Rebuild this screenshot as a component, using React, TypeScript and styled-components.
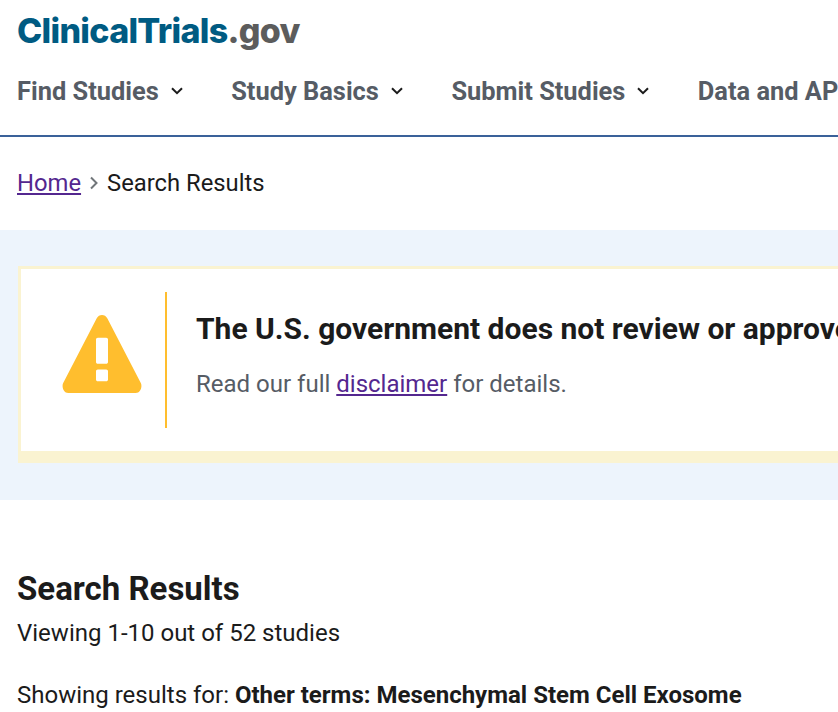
import React from "react";
import styled, { createGlobalStyle } from "styled-components";

const Global = createGlobalStyle`
  html, body { margin: 0; padding: 0; background: #fff; overflow: hidden; width: 838px; height: 712px; }
  body { font-family: Roboto, "Liberation Sans", sans-serif; color: #1b1b1b; }
`;

const Page = styled.div`
  width: 838px;
  height: 712px;
  overflow: hidden;
`;

const Header = styled.header`
  height: 135px;
  border-bottom: 2px solid #3a6199;
  padding-left: 17px;
`;

const Logo = styled.div`
  font-family: Inter, "Liberation Sans", sans-serif;
  font-size: 34px;
  line-height: 40px;
  font-weight: 800;
  letter-spacing: -0.7px;
  color: #005b82;
  padding-top: 11px;
  height: 40px;
  white-space: nowrap;
`;

const Gov = styled.span`
  color: #5c5c5c;
`;

const Nav = styled.nav`
  display: flex;
  gap: 47.5px;
  margin-top: 21px;
  white-space: nowrap;
`;

const NavItem = styled.div`
  display: flex;
  align-items: center;
  gap: 11px;
  font-size: 25.4px;
  line-height: 38px;
  font-weight: 700;
  color: #565c65;
`;

const Crumbs = styled.div`
  display: flex;
  align-items: center;
  gap: 8px;
  height: 32px;
  padding: 30px 0 0 17px;
  font-size: 23.8px;
  line-height: 32px;
`;

const CrumbLink = styled.a`
  color: #54278f;
  text-decoration: underline;
`;

const Band = styled.section`
  margin-top: 31px;
  height: 270px;
  background: #edf4fc;
  padding: 36px 0 0 18px;
  box-sizing: border-box;
`;

const Card = styled.div`
  width: 900px;
  height: 197px;
  box-sizing: border-box;
  background: #fff;
  border: 3px solid #faf3d1;
  border-bottom-width: 12px;
  border-right: 0;
  display: flex;
  align-items: center;
`;

const IconCell = styled.div`
  width: 146px;
  height: 136px;
  margin-top: -1px;
  padding: 0 0 11px 18px;
  border-right: 2px solid #ffbe2e;
  display: flex;
  align-items: center;
  justify-content: center;
  flex-shrink: 0;
  box-sizing: border-box;
`;

const CardBody = styled.div`
  padding: 0 0 9px 29px;
  white-space: nowrap;
`;

const CardTitle = styled.div`
  font-size: 30px;
  line-height: 38px;
  font-weight: 700;
  color: #1b1b1b;
`;

const CardText = styled.div`
  margin-top: 19px;
  font-size: 24px;
  line-height: 34px;
  color: #565c65;
`;

const Results = styled.section`
  padding: 69px 0 0 17px;
`;

const ResultsTitle = styled.h1`
  margin: 0;
  font-size: 33px;
  line-height: 40px;
  font-weight: 700;
  color: #1b1b1b;
`;

const Line = styled.p`
  margin: 9px 0 0;
  font-size: 24px;
  line-height: 30px;
  color: #1b1b1b;
  white-space: nowrap;
`;

const LineLow = styled(Line)`
  margin-top: 32px;
`;

const Chevron = () => (
  <svg width="14" height="10" viewBox="0 0 14 10" fill="none" aria-hidden="true">
    <path d="M2 2.2l5 5 5-5" stroke="#1b1b1b" strokeWidth="2" />
  </svg>
);

const CrumbArrow = () => (
  <svg width="10" height="16" viewBox="0 0 10 16" fill="none" aria-hidden="true">
    <path d="M2 2.5L7.5 8 2 13.5" stroke="#71767a" strokeWidth="2" />
  </svg>
);

const Warning = () => (
  <svg width="80" height="80" viewBox="0 0 80 80" aria-hidden="true">
    <path
      fillRule="evenodd"
      fill="#ffbe2e"
      d="M34.6 4.500c2.400-4.600 8.400-4.600 10.800 0l33.400 64.600c1.800 3.600-.4 9.900-5 9.900H6.200c-4.600 0-6.800-6.300-5-9.900L34.600 4.500zM34 25.500v22.500c0 1 .8 1.800 1.800 1.800h8.400c1 0 1.800-.8 1.800-1.800V25.500c0-1-.8-1.800-1.800-1.800h-8.400c-1 0-1.800.8-1.800 1.800zM35.800 55.500c-1 0-1.800.8-1.800 1.800v8.200c0 1 .8 1.800 1.800 1.800h8.400c1 0 1.800-.8 1.800-1.800v-8.200c0-1-.8-1.800-1.800-1.800h-8.400z"
    />
  </svg>
);

export default function App() {
  return (
    <Page>
      <Global />
      <Header>
        <Logo>
          ClinicalTrials<Gov>.gov</Gov>
        </Logo>
        <Nav>
          <NavItem>Find Studies <Chevron /></NavItem>
          <NavItem>Study Basics <Chevron /></NavItem>
          <NavItem>Submit Studies <Chevron /></NavItem>
          <NavItem>Data and API <Chevron /></NavItem>
        </Nav>
      </Header>
      <Crumbs>
        <CrumbLink href="#">Home</CrumbLink>
        <CrumbArrow />
        <span>Search Results</span>
      </Crumbs>
      <Band>
        <Card>
          <IconCell>
            <Warning />
          </IconCell>
          <CardBody>
            <CardTitle>The U.S. government does not review or approve the safety</CardTitle>
            <CardText>
              Read our full <CrumbLink href="#">disclaimer</CrumbLink> for details.
            </CardText>
          </CardBody>
        </Card>
      </Band>
      <Results>
        <ResultsTitle>Search Results</ResultsTitle>
        <Line>Viewing 1-10 out of 52 studies</Line>
        <LineLow>
          Showing results for: <b>Other terms: Mesenchymal Stem Cell Exosome</b>
        </LineLow>
      </Results>
    </Page>
  );
}
